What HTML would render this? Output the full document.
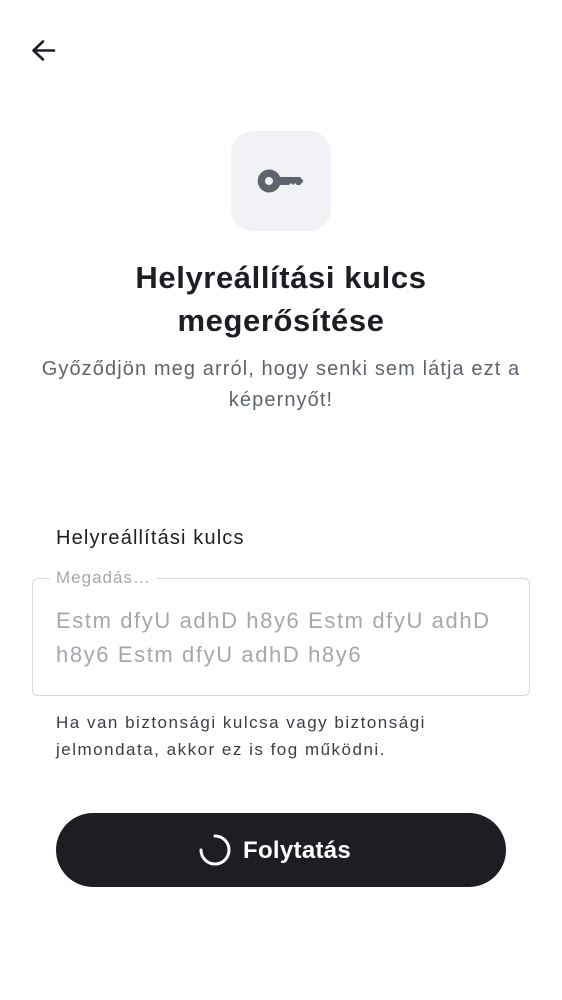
<!DOCTYPE html>
<html><head><meta charset="utf-8"><style>
body{margin:0;width:562px;height:1000px;background:#fff;font-family:"Liberation Sans",sans-serif;position:relative;overflow:hidden}
.a{position:absolute}
</style></head><body>
<svg class="a" style="left:28px;top:36px" width="30" height="30" viewBox="0 0 30 30"><path d="M26 14.5H6M15 5.5L5.5 14.5L15 23.5" fill="none" stroke="#1d1e24" stroke-width="2.6" stroke-linecap="round" stroke-linejoin="round"/></svg>
<div class="a" style="left:231px;top:131px;width:100px;height:100px;border-radius:22px;background:#f1f2f6"></div>
<svg class="a" style="left:255px;top:166px" width="50" height="30" viewBox="0 0 50 30"><path fill="#5f636d" fill-rule="evenodd" d="M14 3.5a11.5 11.5 0 0 1 11 7.5H45l3.5 4-3.5 4h-3l-2-2-2 2-2-2-2 2H25a11.5 11.5 0 1 1-11-15.5zm0 7.5a4 4 0 1 0 0 8 4 4 0 1 0 0-8z"/></svg>
<div class="a" style="left:0;width:562px;top:256px;text-align:center;font-size:31px;font-weight:bold;color:#1d1e24;line-height:43px;letter-spacing:0.6px">Helyreállítási kulcs<br>megerősítése</div>
<div class="a" style="left:0;width:562px;top:354px;text-align:center;font-size:20px;color:#5f636d;line-height:31px;letter-spacing:1.1px">Győződjön meg arról, hogy senki sem látja ezt a<br>képernyőt!</div>
<div class="a" style="left:56px;top:527px;font-size:20px;color:#1d1e24;letter-spacing:1.15px">Helyreállítási kulcs</div>
<div class="a" style="left:32px;top:578px;width:496px;height:116px;border:1.5px solid #d8d9dd;border-radius:6px"></div>
<div class="a" style="left:50px;top:568px;padding:0 6px;background:#fff;font-size:17px;color:#a5a7ad;letter-spacing:1px">Megadás…</div>
<div class="a" style="left:56px;top:604px;font-size:22px;color:#a5a7ad;line-height:34px;letter-spacing:1.6px">Estm dfyU adhD h8y6 Estm dfyU adhD<br>h8y6 Estm dfyU adhD h8y6</div>
<div class="a" style="left:56px;top:709px;font-size:17px;color:#3b3e46;line-height:27px;letter-spacing:1.5px">Ha van biztonsági kulcsa vagy biztonsági<br>jelmondata, akkor ez is fog működni.</div>
<div class="a" style="left:56px;top:813px;width:450px;height:74px;border-radius:37px;background:#1d1e24"></div>
<svg class="a" style="left:198px;top:833px" width="34" height="34" viewBox="0 0 34 34"><path d="M17 3A14 14 0 1 1 3 17" fill="none" stroke="#fff" stroke-width="3" stroke-linecap="round"/></svg>
<div class="a" style="left:243px;top:837px;font-size:24px;font-weight:bold;color:#fff;letter-spacing:0.3px">Folytatás</div>
</body></html>
